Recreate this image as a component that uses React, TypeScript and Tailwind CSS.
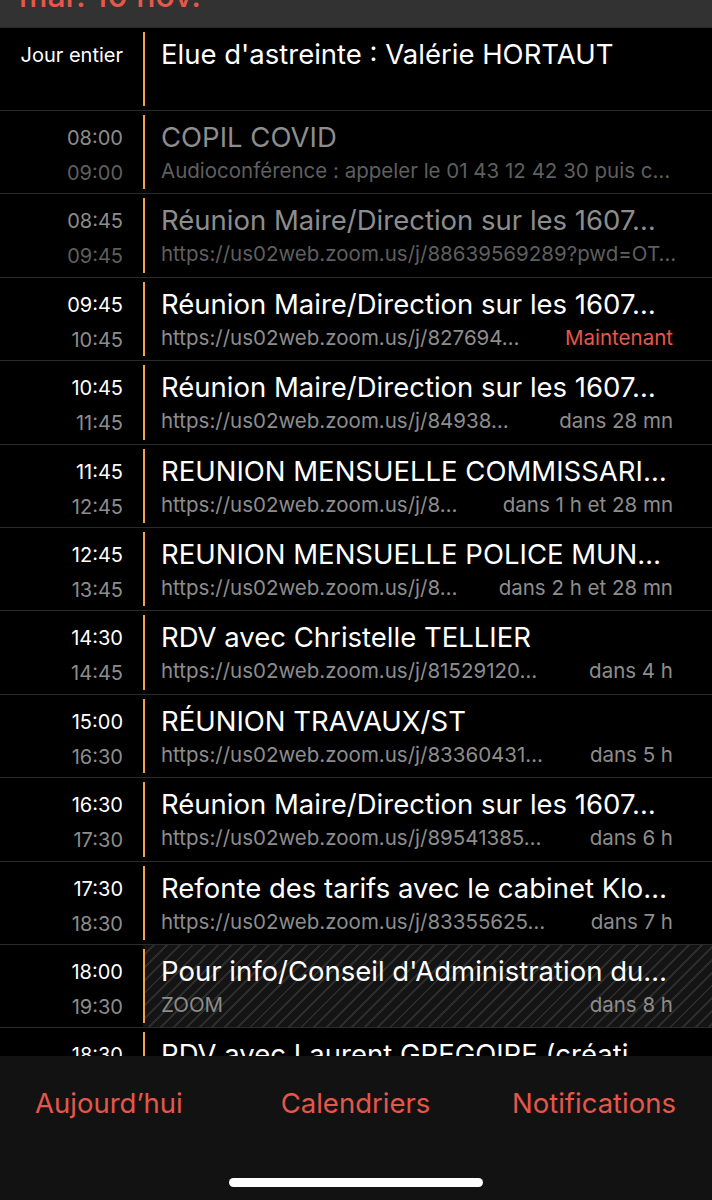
// Calendar day view — iOS dark agenda list with a bottom tab bar.

type Ev = {
  start: string;
  end: string;
  title: string;
  sub: string;
  note?: string;
  past?: boolean;
  now?: boolean;
  tentative?: boolean;
};

const events: Ev[] = [
  { start: "08:00", end: "09:00", title: "COPIL COVID", sub: "Audioconférence  : appeler le 01 43 12 42 30 puis c…", past: true },
  { start: "08:45", end: "09:45", title: "Réunion Maire/Direction sur les 1607…", sub: "https://us02web.zoom.us/j/88639569289?pwd=OT…", past: true },
  { start: "09:45", end: "10:45", title: "Réunion Maire/Direction sur les 1607…", sub: "https://us02web.zoom.us/j/827694…", note: "Maintenant", now: true },
  { start: "10:45", end: "11:45", title: "Réunion Maire/Direction sur les 1607…", sub: "https://us02web.zoom.us/j/84938…", note: "dans 28 mn" },
  { start: "11:45", end: "12:45", title: "REUNION MENSUELLE COMMISSARI…", sub: "https://us02web.zoom.us/j/8…", note: "dans 1 h et 28 mn" },
  { start: "12:45", end: "13:45", title: "REUNION MENSUELLE POLICE MUN…", sub: "https://us02web.zoom.us/j/8…", note: "dans 2 h et 28 mn" },
  { start: "14:30", end: "14:45", title: "RDV avec Christelle TELLIER", sub: "https://us02web.zoom.us/j/81529120…", note: "dans 4 h" },
  { start: "15:00", end: "16:30", title: "RÉUNION TRAVAUX/ST", sub: "https://us02web.zoom.us/j/83360431…", note: "dans 5 h" },
  { start: "16:30", end: "17:30", title: "Réunion Maire/Direction sur les 1607…", sub: "https://us02web.zoom.us/j/89541385…", note: "dans 6 h" },
  { start: "17:30", end: "18:30", title: "Refonte des tarifs avec le cabinet Klo…", sub: "https://us02web.zoom.us/j/83355625…", note: "dans 7 h" },
  { start: "18:00", end: "19:30", title: "Pour info/Conseil d'Administration du…", sub: "ZOOM", note: "dans 8 h", tentative: true },
  { start: "18:30", end: "19:30", title: "RDV avec Laurent GREGOIRE (créati…", sub: "https://us02web.zoom.us/j/8…", note: "dans 8 h et 30 mn" },
];

function Row({ e }: { e: Ev }) {
  return (
    <div className="flex h-[83.4px] shrink-0 border-b border-[#2b2b2b]">
      {/* time column */}
      <div className="flex w-[143px] shrink-0 flex-col items-end pr-[20px] pt-[15px] text-[20px] leading-[24px]">
        <span className={e.past ? "text-[#8d8d8d]" : "text-white"}>{e.start}</span>
        <span className={`mt-[11px] ${e.past ? "text-[#5f5f5f]" : "text-[#8d8d8d]"}`}>{e.end}</span>
      </div>
      {/* body with calendar colour bar */}
      <div
        className={`flex min-w-0 flex-1 py-[4px] ${
          e.tentative
            ? "bg-[repeating-linear-gradient(135deg,#141414_0px,#141414_7px,#2c2c2c_7px,#2c2c2c_9px)]"
            : ""
        }`}
      >
        <div className="w-[2px] shrink-0 bg-[#f2a14d]" />
        <div className="flex min-w-0 flex-1 flex-col pl-[16px] pr-[39px]">
          <div className={`mt-[5px] whitespace-nowrap text-[27.5px] leading-[34px] ${e.past ? "text-[#8d8d8d]" : "text-white"}`}>
            {e.title}
          </div>
          <div className="mt-[5px] flex items-baseline justify-between whitespace-nowrap text-[20.5px] leading-[24px]">
            <span className={e.past ? "text-[#5f5f5f]" : "text-[#8d8d8d]"}>{e.sub}</span>
            {e.note && (
              <span className={e.now ? "text-[#e5574a]" : "text-[#8d8d8d]"}>{e.note}</span>
            )}
          </div>
        </div>
      </div>
    </div>
  );
}

export default function App() {
  return (
    <div className="flex h-[1200px] w-[712px] flex-col overflow-hidden bg-black font-['Inter',sans-serif]">
      {/* sticky date header, scrolled mostly out of view */}
      <div className="h-[28px] shrink-0 overflow-hidden border-b border-[#2b2b2b] bg-[#323232] px-[19px]">
        <div className="-mt-[24px] text-[32px] font-medium leading-[40px] text-[#e5574a]">mar. 10 nov.</div>
      </div>

      <div className="flex min-h-0 flex-1 flex-col overflow-hidden">
        {/* all-day row */}
        <div className="flex h-[83px] shrink-0 border-b border-[#2b2b2b]">
          <div className="flex w-[143px] shrink-0 justify-end pr-[20px] pt-[15px] text-[20px] leading-[24px] text-white">
            Jour entier
          </div>
          <div className="flex flex-1 py-[4px]">
            <div className="w-[2px] shrink-0 bg-[#f2a14d]" />
            <div className="mt-[5px] pl-[16px] text-[27.5px] leading-[34px] text-white">
              Elue d'astreinte : Valérie HORTAUT
            </div>
          </div>
        </div>
        {events.map((e, i) => (
          <Row key={i} e={e} />
        ))}
      </div>

      {/* tab bar */}
      <div className="relative h-[144px] shrink-0 bg-[#121212]">
        <div className="grid grid-cols-3 items-center pl-[35px] pr-[36px] pt-[30px] text-[27.5px] leading-[34px] text-[#e5574a]">
          <span className="justify-self-start">Aujourd’hui</span>
          <span className="justify-self-center">Calendriers</span>
          <span className="justify-self-end">Notifications</span>
        </div>
        <div className="absolute bottom-[13px] left-[229px] h-[9px] w-[254px] rounded-full bg-white" />
      </div>
    </div>
  );
}
